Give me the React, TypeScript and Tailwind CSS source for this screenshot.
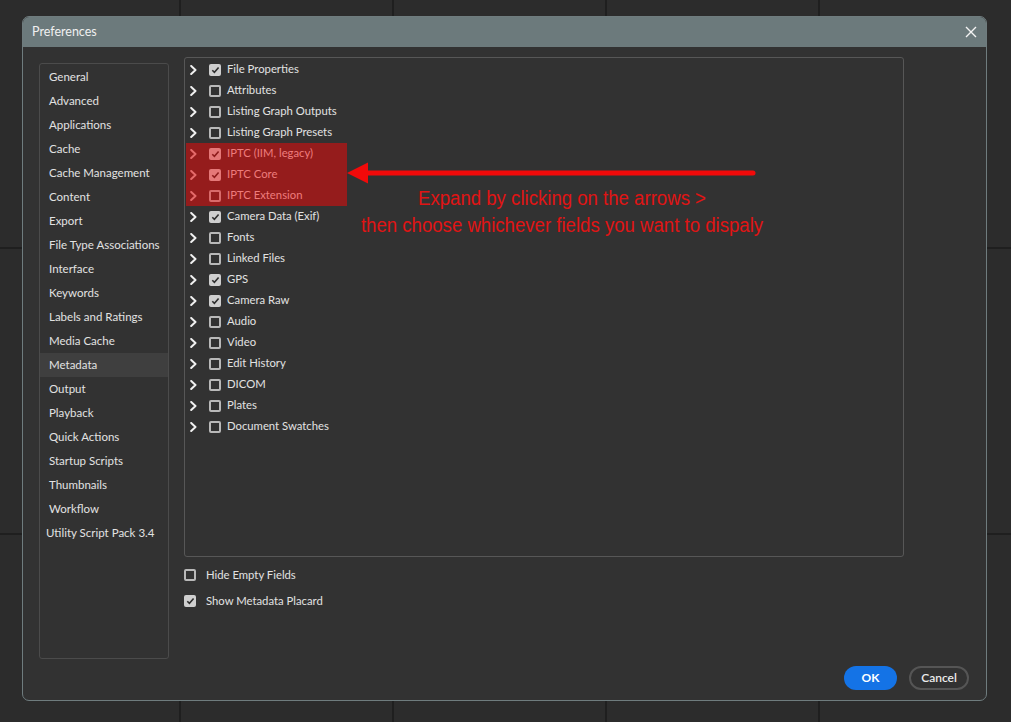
import React from 'react';

const sidebarItems = [
  'General',
  'Advanced',
  'Applications',
  'Cache',
  'Cache Management',
  'Content',
  'Export',
  'File Type Associations',
  'Interface',
  'Keywords',
  'Labels and Ratings',
  'Media Cache',
  'Metadata',
  'Output',
  'Playback',
  'Quick Actions',
  'Startup Scripts',
  'Thumbnails',
  'Workflow',
];

type Row = { label: string; checked: boolean; red?: boolean };

const rows: Row[] = [
  { label: 'File Properties', checked: true },
  { label: 'Attributes', checked: false },
  { label: 'Listing Graph Outputs', checked: false },
  { label: 'Listing Graph Presets', checked: false },
  { label: 'IPTC (IIM, legacy)', checked: true, red: true },
  { label: 'IPTC Core', checked: true, red: true },
  { label: 'IPTC Extension', checked: false, red: true },
  { label: 'Camera Data (Exif)', checked: true },
  { label: 'Fonts', checked: false },
  { label: 'Linked Files', checked: false },
  { label: 'GPS', checked: true },
  { label: 'Camera Raw', checked: true },
  { label: 'Audio', checked: false },
  { label: 'Video', checked: false },
  { label: 'Edit History', checked: false },
  { label: 'DICOM', checked: false },
  { label: 'Plates', checked: false },
  { label: 'Document Swatches', checked: false },
];

const Chevron = ({ red }: { red?: boolean }) => (
  <svg width="7" height="10" viewBox="0 0 7 10" className="shrink-0">
    <polyline
      points="1.2,1 5.5,5 1.2,9"
      fill="none"
      stroke={red ? '#e46a6a' : '#f0f0f0'}
      strokeWidth="2"
      strokeLinecap="round"
      strokeLinejoin="round"
    />
  </svg>
);

const Checkbox = ({ checked, red }: { checked: boolean; red?: boolean }) => {
  if (checked) {
    return (
      <div
        className={`w-[12px] h-[12px] rounded-[2px] shrink-0 flex items-center justify-center ${
          red ? 'bg-[#e57878]' : 'bg-[#cfcfcf]'
        }`}
      >
        <svg width="9" height="8" viewBox="0 0 9 8">
          <polyline
            points="1.3,4.2 3.4,6.3 7.6,1.5"
            fill="none"
            stroke={red ? '#8e1c1c' : '#2e2e2e'}
            strokeWidth="1.6"
          />
        </svg>
      </div>
    );
  }
  return (
    <div
      className={`w-[12px] h-[12px] rounded-[2px] shrink-0 border-2 ${
        red ? 'border-[#d86a6a]' : 'border-[#b9b9b9]'
      }`}
    />
  );
};

export default function App() {
  return (
    <div
      className="relative w-[1011px] h-[722px] overflow-hidden bg-[#2b2b2b]"
      style={{ fontFamily: 'Lato, "Noto Sans", sans-serif' }}
    >
      {/* thumbnail grid behind the dialog */}
      <div className="-ml-[32px] -mt-[37px] grid grid-cols-[repeat(6,213px)] grid-rows-[repeat(4,286px)]">
        {Array.from({ length: 24 }).map((_, i) => (
          <div key={i} className="border-r-2 border-b-2 border-[#1f1f1f] bg-[#2c2c2c]" />
        ))}
      </div>

      {/* Dialog */}
      <div className="absolute left-[22px] top-[16px] w-[965px] h-[685px] rounded-[7px] border border-[#6f7c7e] bg-[#323232] overflow-hidden flex flex-col">
        <div className="h-[30px] shrink-0 bg-[#6c7a7c] flex items-center justify-between pl-[9px] pr-[9px]">
          <span className="text-[12.5px] text-[#f0f0f0]">Preferences</span>
          <svg width="12" height="12" viewBox="0 0 12 12">
            <path d="M1 1L11 11M11 1L1 11" stroke="#f4f4f4" strokeWidth="1.4" />
          </svg>
        </div>

        <div className="flex pl-[16px]">
          {/* Sidebar */}
          <div className="mt-[16px] w-[130px] h-[596px] rounded-[3px] border border-[#4b4b4b] pt-[1px] flex flex-col">
            {sidebarItems.map((item) => (
              <div
                key={item}
                className={`h-[24px] flex items-center pl-[9px] text-[11.5px] text-[#e2e2e2] ${
                  item === 'Metadata' ? 'bg-[#3f3f3f]' : ''
                }`}
              >
                {item}
              </div>
            ))}
            <div className="h-[24px] flex items-center pl-[6px] text-[11.5px] text-[#e2e2e2]">
              Utility Script Pack 3.4
            </div>
          </div>

          {/* Right column */}
          <div className="ml-[15px] mt-[10px] flex flex-col">
            <div className="relative w-[720px] h-[500px] rounded-[3px] border border-[#575757] pt-[1px]">
              {rows.map((r) => (
                <div
                  key={r.label}
                  className={`h-[21px] flex items-center text-[11.3px] ${
                    r.red
                      ? 'ml-[1px] w-[161px] pl-[4px] bg-[#951c1c] text-[#ee7c7c]'
                      : 'pl-[5px] text-[#e2e2e2]'
                  }`}
                >
                  <Chevron red={r.red} />
                  <div className="ml-[12px]">
                    <Checkbox checked={r.checked} red={r.red} />
                  </div>
                  <span className="ml-[6px]">{r.label}</span>
                </div>
              ))}

              {/* annotation arrow */}
              <svg
                width="412"
                height="24"
                viewBox="0 0 412 24"
                className="absolute left-[162px] top-[103px]"
              >
                <line x1="16" y1="12" x2="406" y2="12" stroke="#f20a0a" strokeWidth="5" strokeLinecap="round" />
                <polygon points="0,12 21,1.5 21,22.5" fill="#f20a0a" />
              </svg>

              <div
                className="absolute left-[127px] top-[127px] w-[500px] text-center text-[20px] leading-[27px] text-[#e01414] scale-x-[0.93]"
                style={{ fontFamily: '"Liberation Sans", Arial, sans-serif' }}
              >
                <div>Expand by clicking on the arrows &gt;</div>
                <div>then choose whichever fields you want to dispaly</div>
              </div>
            </div>

            <div className="mt-[8px] h-[20px] flex items-center text-[11.3px] text-[#e2e2e2]">
              <Checkbox checked={false} />
              <span className="ml-[10px]">Hide Empty Fields</span>
            </div>
            <div className="mt-[6px] h-[20px] flex items-center text-[11.3px] text-[#e2e2e2]">
              <Checkbox checked={true} />
              <span className="ml-[10px]">Show Metadata Placard</span>
            </div>
          </div>
        </div>

        {/* Footer */}
        <div className="mt-[7px] flex justify-end gap-[12px] pr-[17px]">
          <button className="w-[53px] h-[24px] rounded-full bg-[#1473e6] text-white text-[12px] font-bold">
            OK
          </button>
          <button className="w-[60px] h-[24px] rounded-full border-2 border-[#555555] text-[#ececec] text-[12px] font-semibold">
            Cancel
          </button>
        </div>
      </div>
    </div>
  );
}
